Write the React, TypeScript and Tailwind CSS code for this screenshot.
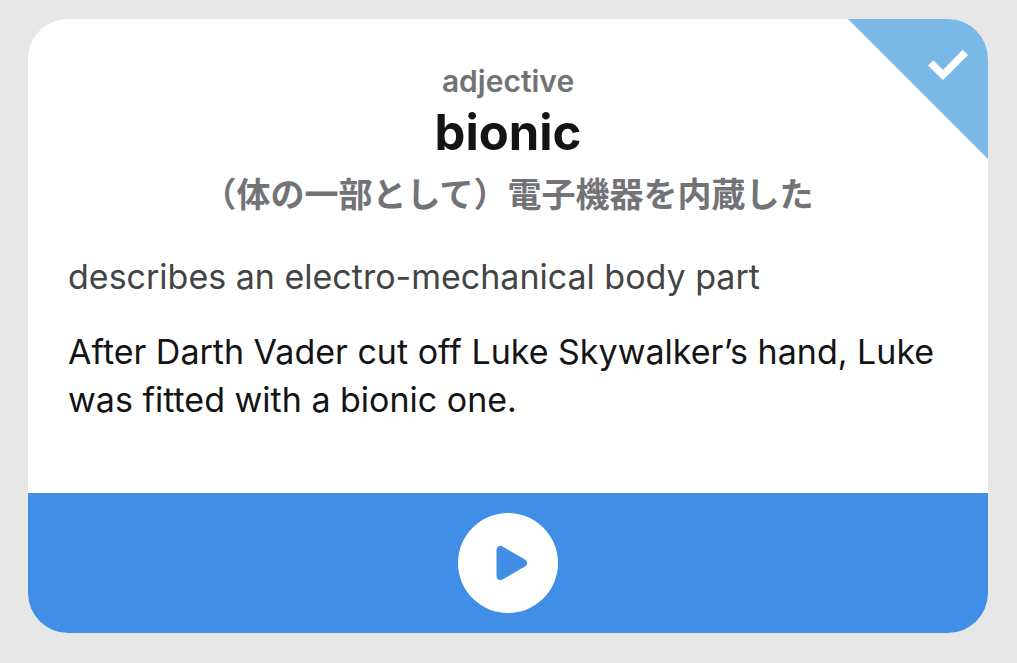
export default function App() {
  return (
    <main className="min-h-screen bg-[#e7e7e7] pt-[19px] pr-[29px] pb-[30px] pl-7 font-['Inter','Noto_Sans_CJK_JP',sans-serif]">
      <article className="relative overflow-hidden rounded-[40px] bg-white">
        <header className="flex flex-col items-center pt-10 text-center">
          <p className="text-[30px] leading-[44px] font-semibold text-[#727277]">adjective</p>
          <h1 className="text-[49px] leading-[60px] font-bold text-[#141416]">bionic</h1>
          <p lang="ja" className="text-[34px] leading-[64px] font-bold text-[#727277]">（体の一部として）電子機器を内蔵した</p>
        </header>
        <div className="px-10 pt-[26px] pb-[69px] text-[34px] leading-12">
          <p className="text-[#444444]">describes an electro-mechanical body part</p>
          <p className="mt-[27px] text-[#141416]">After Darth Vader cut off Luke Skywalker’s hand, Luke was fitted with a bionic one.</p>
        </div>
        <footer className="flex h-[140px] items-center justify-center bg-[#408ee6]">
          <button type="button" aria-label="Play pronunciation" className="flex size-[100px] items-center justify-center rounded-full bg-white">
            <svg viewBox="0 0 100 100" className="size-full" aria-hidden="true">
              <path d="M42.5 37v26l22.5-13z" fill="#408ee6" stroke="#408ee6" strokeWidth="8" strokeLinejoin="round" />
            </svg>
          </button>
        </footer>
        <svg viewBox="0 0 140 140" className="absolute top-0 right-0 size-[140px]" role="img" aria-label="Learned">
          <path d="M0 0h140v140z" fill="#7ab8e8" />
          <path d="M80 46.5l5.3-5.2 9.7 9.7 19.7-20.3 5.3 5.2L95 61z" fill="#fff" />
        </svg>
      </article>
    </main>
  );
}
